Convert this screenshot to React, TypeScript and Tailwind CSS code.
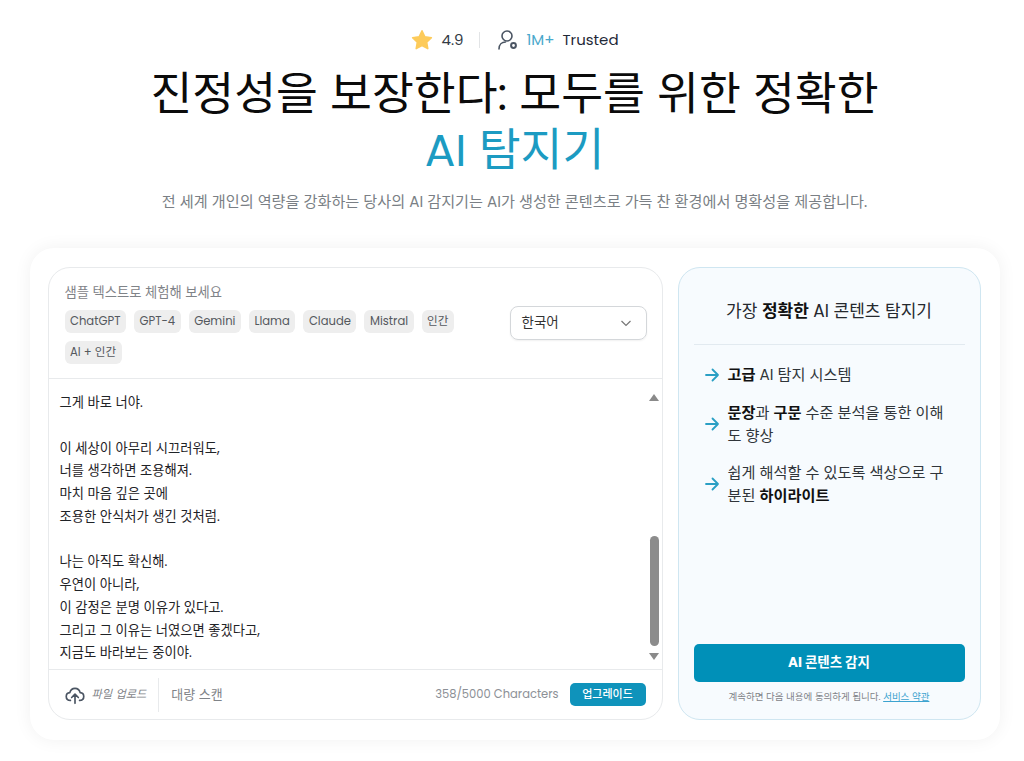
import React from "react";

const latin = "font-['Poppins','Inter','Noto_Sans_CJK_KR',sans-serif]";

function Arrow() {
  return (
    <svg width="16" height="16" viewBox="0 0 16 16" fill="none" stroke="#2a9fc4" strokeWidth="1.8" strokeLinecap="round" strokeLinejoin="round" className="shrink-0">
      <path d="M2 8h12M8.500 2.500 14 8l-5.500 5.500" />
    </svg>
  );
}

const chips = ["ChatGPT", "GPT-4", "Gemini", "Llama", "Claude", "Mistral", "인간", "AI + 인간"];
const lines = [
  "그게 바로 너야.", "", "이 세상이 아무리 시끄러워도,", "너를 생각하면 조용해져.", "마치 마음 깊은 곳에", "조용한 안식처가 생긴 것처럼.", "",
  "나는 아직도 확신해.", "우연이 아니라,", "이 감정은 분명 이유가 있다고.", "그리고 그 이유는 너였으면 좋겠다고,", "지금도 바라보는 중이야.",
];

export default function App() {
  return (
    <div className={`w-[1024px] h-[761px] overflow-hidden bg-white pl-[5px] flex flex-col items-center ${latin}`}>
      <div className="mt-[28px] h-[24px] flex items-center text-[15px] text-[#333b45]">
        <svg width="24" height="24" viewBox="0 0 24 24" className="mr-[7px]"><path fill="#fdcb5a" stroke="#fdcb5a" strokeLinejoin="round" strokeWidth="1.5" d="M12 2.800l2.900 6 6.500.9-4.700 4.500 1.100 6.500-5.800-3.100-5.800 3.100 1.100-6.500-4.700-4.500 6.500-.9z" /></svg>
        <span>4.9</span>
        <div className="w-px h-[16px] bg-[#e2e4e6] ml-[15px] mr-[17px]" />
        <svg width="22" height="22" viewBox="0 0 22 22" fill="none" stroke="#4b5563" strokeWidth="1.6" strokeLinecap="round" className="mr-[8px]">
          <circle cx="10" cy="7" r="5" />
          <path d="M2 20c0-4.500 3-7 6.500-7" />
          <circle cx="16.500" cy="16.500" r="2.400" strokeWidth="2" />
        </svg>
        <span className="text-[#4aa8cc]">1M+</span>
        <span className="ml-[8px] text-[#1f2937]">Trusted</span>
      </div>
      <h1 className="mt-[14px] text-[45.5px] leading-[56px] font-normal text-[#0b0b0b] text-center whitespace-nowrap">
        진정성을 보장한다: 모두를 위한 정확한
        <br />
        <span className="text-[#1c9bc2]">AI 탐지기</span>
      </h1>
      <p className="mt-[14px] text-[15.17px] leading-[20px] text-[#7a7f85] whitespace-nowrap">
        전 세계 개인의 역량을 강화하는 당사의 AI 감지기는 AI가 생성한 콘텐츠로 가득 찬 환경에서 명확성을 제공합니다.
      </p>
      <div className="mt-[36px] w-[970px] h-[492px] shrink-0 rounded-[24px] bg-white shadow-[0_0_18px_rgba(0,0,0,0.06)] px-[18px] py-[19px] flex gap-[15px]">
        <div className="w-[615px] h-[453px] rounded-[22px] border border-[#e8eaec] flex flex-col overflow-hidden">
          <div className="h-[111px] shrink-0 border-b border-[#e8eaec] pl-[16px] pr-[15px] flex justify-between">
            <div className="w-[400px] pt-[16px]">
              <div className="text-[13.3px] leading-[18px] text-[#7f8388]">샘플 텍스트로 체험해 보세요</div>
              <div className="mt-[8px] flex flex-wrap gap-x-[8px] gap-y-[8px]">
                {chips.map((c) => (
                  <span key={c} className="h-[23px] px-[5.5px] rounded-[6px] bg-[#eeeeee] text-[11.6px] leading-[23px] text-[#55595e]">{c}</span>
                ))}
              </div>
            </div>
            <div className="mt-[38px] w-[137px] h-[34px] rounded-[8px] border border-[#d4d7da] shadow-[0_1px_2px_rgba(0,0,0,0.06)] flex items-center justify-between pl-[11px] pr-[14px] text-[13.5px] text-[#333]">
              <span>한국어</span>
              <svg width="12" height="12" viewBox="0 0 12 12" fill="none" stroke="#777" strokeWidth="1.2"><path d="M1.500 4 6 8.500 10.500 4" /></svg>
            </div>
          </div>
          <div className="flex-1 min-h-0 flex">
            <div className="flex-1 pl-[11px] pt-[13px] text-[13.3px] leading-[22.75px] text-[#1f2327]">
              {lines.map((l, i) => (
                <div key={i} className="h-[22.75px] whitespace-nowrap">{l}</div>
              ))}
            </div>
            <div className="w-[13px] mr-[1px] flex flex-col items-center pt-[15px] pb-[9px]">
              <div className="w-0 h-0 border-x-[5px] border-x-transparent border-b-[7px] border-b-[#8a8a8a]" />
              <div className="flex-1" />
              <div className="w-[9px] h-[110px] rounded-[5px] bg-[#8c8c8c]" />
              <div className="mt-[7px] w-0 h-0 border-x-[5px] border-x-transparent border-t-[7px] border-t-[#8a8a8a]" />
            </div>
          </div>
          <div className="h-[50px] shrink-0 border-t border-[#e8eaec] pl-[16px] pr-[16px] flex items-center">
            <svg width="20" height="20" viewBox="0 0 24 24" fill="none" stroke="#4b5563" strokeWidth="2" strokeLinecap="round" strokeLinejoin="round">
              <path d="M6.500 18.500C3.500 18.500 1.500 16.500 1.500 13.800c0-2.500 1.900-4.400 4.300-4.600C6.600 6 9 4 12 4s5.400 2 6.200 5.200c2.400.2 4.300 2.100 4.300 4.600 0 2.700-2 4.700-5 4.700" />
              <path d="M12 22V11M8 15l4-4 4 4" />
            </svg>
            <span className="ml-[7px] text-[11.2px] italic text-[#7f8388]">파일 업로드</span>
            <div className="w-px h-[34px] bg-[#e8eaec] ml-[12px]" />
            <span className="ml-[12px] text-[13px] text-[#7f8388]">대량 스캔</span>
            <span className="ml-auto text-[11.5px] text-[#8c9096]">358/5000 Characters</span>
            <span className="ml-[11px] w-[76px] h-[23px] rounded-[5px] bg-[#0f93bb] text-white text-[11px] font-medium leading-[23px] text-center">업그레이드</span>
          </div>
        </div>
        <div className="w-[303px] h-[453px] rounded-[22px] border border-[#cfe6f1] bg-[#f7fbfe] px-[15px] flex flex-col">
          <div className="h-[77px] shrink-0 border-b border-[#e2eaf0] pt-[30px] text-center text-[17px] leading-[26px] text-[#25292e]">
            <span>가장 <b className="font-bold text-[#111]">정확한</b> AI 콘텐츠 탐지기</span>
          </div>
          <div className="mt-[18px] pl-[10px] pr-[19px] flex flex-col gap-[14.5px] text-[15.2px] leading-[23px] text-[#30353a] break-all">
            <div className="flex items-center gap-[8px]"><Arrow /><span><b className="text-[#111]">고급</b> AI 탐지 시스템</span></div>
            <div className="flex items-center gap-[8px]"><Arrow /><span><b className="text-[#111]">문장</b>과 <b className="text-[#111]">구문</b> 수준 분석을 통한 이해도 향상</span></div>
            <div className="flex items-center gap-[8px]"><Arrow /><span>쉽게 해석할 수 있도록 색상으로 구분된 <b className="text-[#111]">하이라이트</b></span></div>
          </div>
          <div className="mt-auto h-[38px] rounded-[5px] bg-[#0090b8] text-white text-[13.5px] font-bold flex items-center justify-center">AI 콘텐츠 감지</div>
          <div className="mt-[7px] mb-[14px] text-[9.5px] leading-[16px] text-[#7f8388] text-center">
            계속하면 다음 내용에 동의하게 됩니다. <span className="text-[#3ca3cf] underline">서비스 약관</span>
          </div>
        </div>
      </div>
    </div>
  );
}
